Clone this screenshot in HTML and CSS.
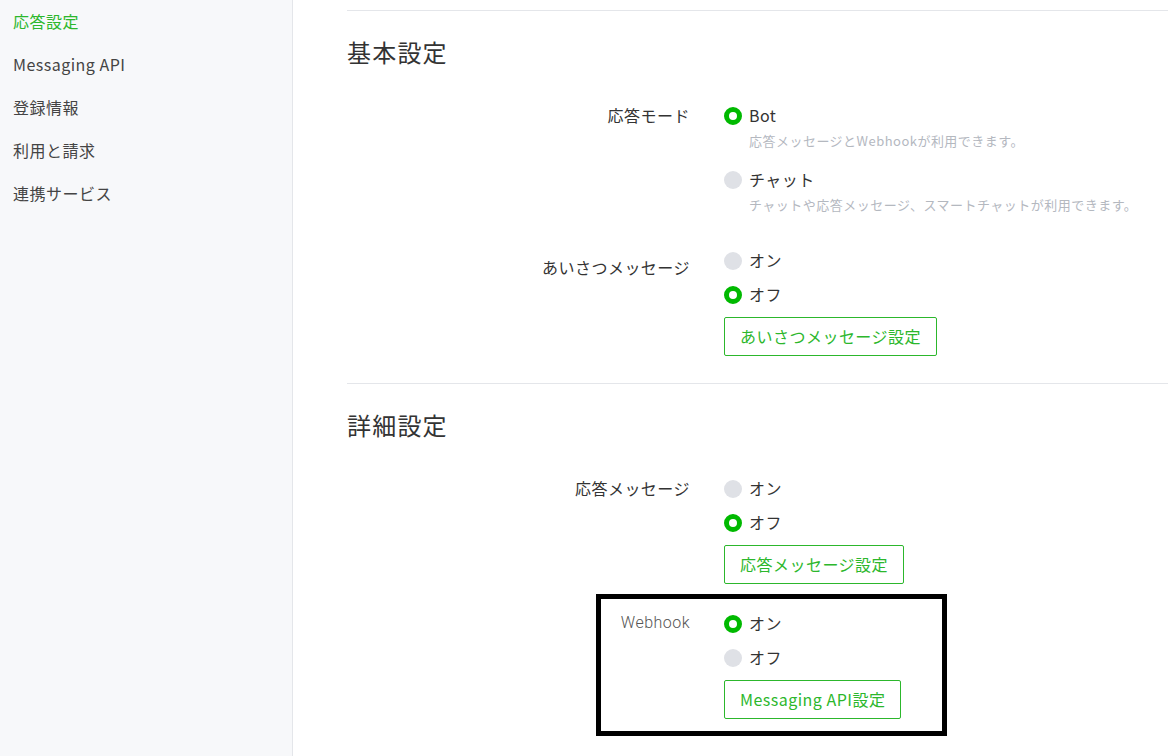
FILE: index.html
```html
<!DOCTYPE html>
<html lang="ja">
<head>
    <meta charset="UTF-8">
    <title>応答設定</title>
    <link rel="stylesheet" href="styles.css">
</head>
<body>
    <div class="sidebar">
        <ul>
            <li class="active">応答設定</li>
            <li>Messaging API</li>
            <li>登録情報</li>
            <li>利用と請求</li>
            <li>連携サービス</li>
        </ul>
    </div>
    <div class="content">
        <div class="section">
            <h2>基本設定</h2>
            <div class="row">
                <div class="label">応答モード</div>
                <div class="options">
                    <div class="option checked">
                        <span class="radio"></span>Bot
                        <div class="desc">応答メッセージとWebhookが利用できます。</div>
                    </div>
                    <div class="option">
                        <span class="radio"></span>チャット
                        <div class="desc">チャットや応答メッセージ、スマートチャットが利用できます。</div>
                    </div>
                </div>
            </div>
            <div class="row">
                <div class="label shifted">あいさつメッセージ</div>
                <div class="options">
                    <div class="option"><span class="radio"></span>オン</div>
                    <div class="option checked"><span class="radio"></span>オフ</div>
                    <button class="btn">あいさつメッセージ設定</button>
                </div>
            </div>
        </div>
        <div class="section">
            <h2>詳細設定</h2>
            <div class="row">
                <div class="label">応答メッセージ</div>
                <div class="options">
                    <div class="option"><span class="radio"></span>オン</div>
                    <div class="option checked"><span class="radio"></span>オフ</div>
                    <button class="btn">応答メッセージ設定</button>
                </div>
            </div>
            <div class="row marked">
                <div class="label light">Webhook</div>
                <div class="options">
                    <div class="option checked"><span class="radio"></span>オン</div>
                    <div class="option"><span class="radio"></span>オフ</div>
                    <button class="btn">Messaging API設定</button>
                </div>
                <div class="highlight"></div>
            </div>
        </div>
    </div>
</body>
</html>
```

FILE: styles.css
```css
body {
    font-family: "Noto Sans CJK JP", "Noto Sans", sans-serif;
    letter-spacing: 0.03em;
    color: #333;
    margin: 0;
    display: flex;
    height: 100vh;
    overflow: hidden;
    background: #fff;
}
.sidebar {
    width: 292px;
    flex-shrink: 0;
    background: #f7f8fa;
    border-right: 1px solid #e4e6ea;
}
.sidebar ul {
    list-style: none;
    margin: 0;
    padding: 0;
}
.sidebar li {
    height: 43px;
    line-height: 43px;
    padding-left: 13px;
    font-size: 16px;
    color: #444;
}
.sidebar li.active {
    color: #2cb72c;
}
.content {
    flex-grow: 1;
    padding: 10px 0 0 54px;
}
.section {
    border-top: 1px solid #e4e6ea;
    padding: 25px 0 27px;
}
.section h2 {
    margin: 0 0 35px;
    font-size: 24px;
    font-weight: normal;
    line-height: 32px;
    letter-spacing: 0.05em;
    color: #333;
}
.row {
    display: flex;
    margin-bottom: 27px;
}
.row:last-child {
    margin-bottom: 0;
}
.label {
    width: 343px;
    text-align: right;
    font-size: 16px;
    line-height: 24px;
    color: #333;
}
.label.shifted {
    padding-top: 7px;
}
.label.light {
    color: #555;
    font-family: Roboto, sans-serif;
    font-weight: 300;
}
.options {
    margin-left: 34px;
    display: flex;
    flex-direction: column;
    align-items: flex-start;
    gap: 10px;
}
.option {
    font-size: 16px;
    line-height: 24px;
    color: #333;
}
.radio {
    display: inline-block;
    width: 18px;
    height: 18px;
    border-radius: 50%;
    background: #dfe1e6;
    vertical-align: -3px;
    margin-right: 7px;
    box-sizing: border-box;
}
.option.checked .radio {
    background: #fff;
    border: 5px solid #00b900;
}
.desc {
    font-size: 13px;
    line-height: 20px;
    color: #b4b8bf;
    margin: 4px 0 6px 25px;
}
.btn {
    margin-top: 1px;
    height: 39px;
    padding: 0 15px 2px;
    background: #fff;
    border: 1px solid #2cb72c;
    border-radius: 2px;
    color: #2cb72c;
    font-family: "Noto Sans CJK JP", "Noto Sans", sans-serif;
    font-size: 16px;
    letter-spacing: 0.03em;
}
.row.marked {
    position: relative;
}
.highlight {
    position: absolute;
    left: 249px;
    top: -17px;
    width: 351px;
    height: 142px;
    border: 5px solid #000;
    box-sizing: border-box;
}
```
